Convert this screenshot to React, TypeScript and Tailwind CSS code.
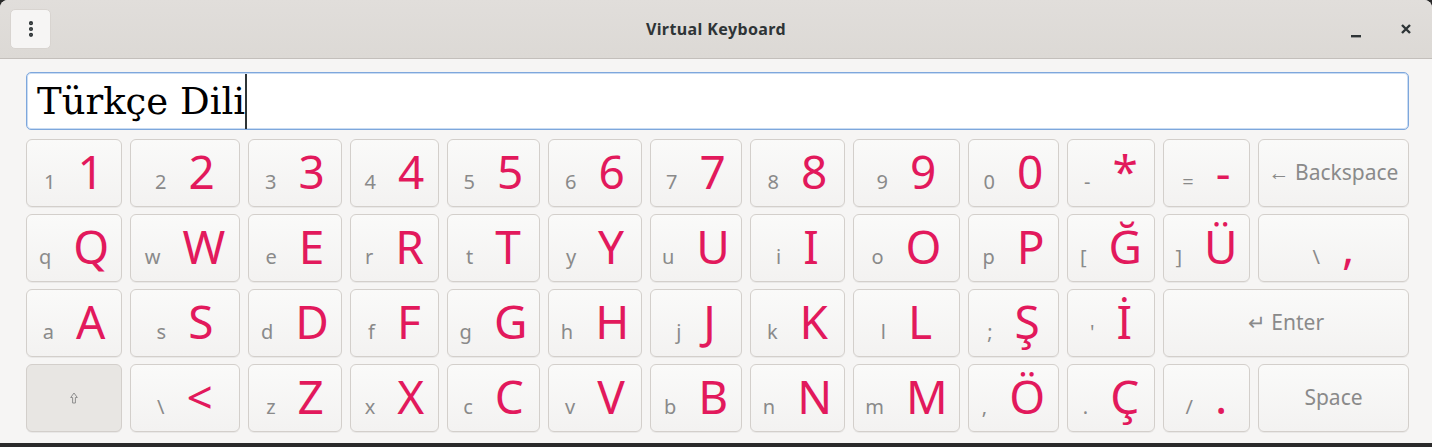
import { EllipsisVertical } from "lucide-react";

type KeyDef = { small?: string; big?: string; label?: string; kind?: "shift" | "wide" };

const rows: KeyDef[][] = [
  [
    { small: "1", big: "1" },
    { small: "2", big: "2" },
    { small: "3", big: "3" },
    { small: "4", big: "4" },
    { small: "5", big: "5" },
    { small: "6", big: "6" },
    { small: "7", big: "7" },
    { small: "8", big: "8" },
    { small: "9", big: "9" },
    { small: "0", big: "0" },
    { small: "-", big: "*" },
    { small: "=", big: "-" },
    { label: "← Backspace" },
  ],
  [
    { small: "q", big: "Q" },
    { small: "w", big: "W" },
    { small: "e", big: "E" },
    { small: "r", big: "R" },
    { small: "t", big: "T" },
    { small: "y", big: "Y" },
    { small: "u", big: "U" },
    { small: "i", big: "I" },
    { small: "o", big: "O" },
    { small: "p", big: "P" },
    { small: "[", big: "Ğ" },
    { small: "]", big: "Ü" },
    { small: "\\", big: "," },
  ],
  [
    { small: "a", big: "A" },
    { small: "s", big: "S" },
    { small: "d", big: "D" },
    { small: "f", big: "F" },
    { small: "g", big: "G" },
    { small: "h", big: "H" },
    { small: "j", big: "J" },
    { small: "k", big: "K" },
    { small: "l", big: "L" },
    { small: ";", big: "Ş" },
    { small: "'", big: "İ" },
    { label: "↵ Enter", kind: "wide" },
  ],
  [
    { kind: "shift" },
    { small: "\\", big: "<" },
    { small: "z", big: "Z" },
    { small: "x", big: "X" },
    { small: "c", big: "C" },
    { small: "v", big: "V" },
    { small: "b", big: "B" },
    { small: "n", big: "N" },
    { small: "m", big: "M" },
    { small: ",", big: "Ö" },
    { small: ".", big: "Ç" },
    { small: "/", big: "." },
    { label: "Space" },
  ],
];

function Key({ k }: { k: KeyDef }) {
  const base =
    "h-[68px] rounded-[6px] border border-[#d3cfcb] flex items-center justify-center shadow-[0_1px_0_rgba(0,0,0,0.05)]";
  if (k.kind === "shift") {
    // shift key is drawn pressed-looking
    return (
      <div className={`${base} bg-[#e8e6e3]`}>
        <svg width="8" height="12" viewBox="0 0 8 12">
          <path d="M4 1 L7.3 5.5 H5.4 V11 H2.6 V5.5 H0.7 Z" fill="none" stroke="#8e8e8e" strokeWidth="1" />
        </svg>
      </div>
    );
  }
  if (k.label) {
    return (
      <div className={`${base} bg-gradient-to-b from-[#fafaf9] to-[#f3f2f1] ${k.kind === "wide" ? "col-span-2" : ""}`}>
        <span className="text-[21px] text-[#8a8a8a]">{k.label}</span>
      </div>
    );
  }
  return (
    <div className={`${base} bg-gradient-to-b from-[#fafaf9] to-[#f3f2f1] items-end pb-[12px]`}>
      <div className="flex items-baseline gap-[22px]">
        <span className="text-[20px] leading-none text-[#8a8a8a]">{k.small}</span>
        <span className="text-[46px] leading-none text-[#e2195c]">{k.big}</span>
      </div>
    </div>
  );
}

export default function App() {
  return (
    <div className="w-[1432px] h-[447px] bg-[#2a2a2a] overflow-hidden font-['Noto_Sans',sans-serif]">
      <div className="h-[443px] rounded-t-[8px] bg-[#f6f5f4] flex flex-col overflow-hidden">
        <header className="h-[59px] bg-gradient-to-b from-[#e1dedb] to-[#dcd9d5] border-b border-[#c3bfbb] grid grid-cols-[1fr_auto_1fr] items-center px-[10px]">
          <button className="w-[41px] h-[40px] rounded-[5px] bg-[#f6f5f4] border border-[#d8d4d0] flex items-center justify-center text-[#2e3436]">
            <EllipsisVertical className="w-[20px] h-[20px]" strokeWidth={3} />
          </button>
          <h1 className="text-[16px] font-bold tracking-[0.4px] text-[#2e3436]">Virtual Keyboard</h1>
          <div className="flex items-center justify-end gap-[38px] pr-[10px]">
            <svg width="12" height="12" viewBox="0 0 12 12" className="mt-[6px]">
              <rect x="1" y="9" width="10" height="2.4" fill="#2e3436" />
            </svg>
            <svg width="12" height="12" viewBox="0 0 12 12" className="-mt-[1px]">
              <path d="M2 2 L10 10 M10 2 L2 10" stroke="#2e3436" strokeWidth="2.4" />
            </svg>
          </div>
        </header>
        <div className="pl-[26px] pt-[13px]">
          <div className="w-[1383px] h-[58px] rounded-[5px] bg-white border border-[#7ea7dc] shadow-[inset_0_0_0_1px_#c9dcf3] flex items-center pl-[10px]">
            <span className="font-['DejaVu_Serif',serif] text-[37px] text-black leading-none">Türkçe Dili</span>
            <span className="w-[2px] h-[55px] bg-[#2e3436]" />
          </div>
          <div className="mt-[9px] grid grid-cols-[96px_110px_94px_89px_93px_94px_92px_95px_107px_91px_88px_87px_151px] gap-x-[8px] gap-y-[7px]">
            {rows.map((row, i) => row.map((k, j) => <Key key={`${i}-${j}`} k={k} />))}
          </div>
        </div>
      </div>
    </div>
  );
}
